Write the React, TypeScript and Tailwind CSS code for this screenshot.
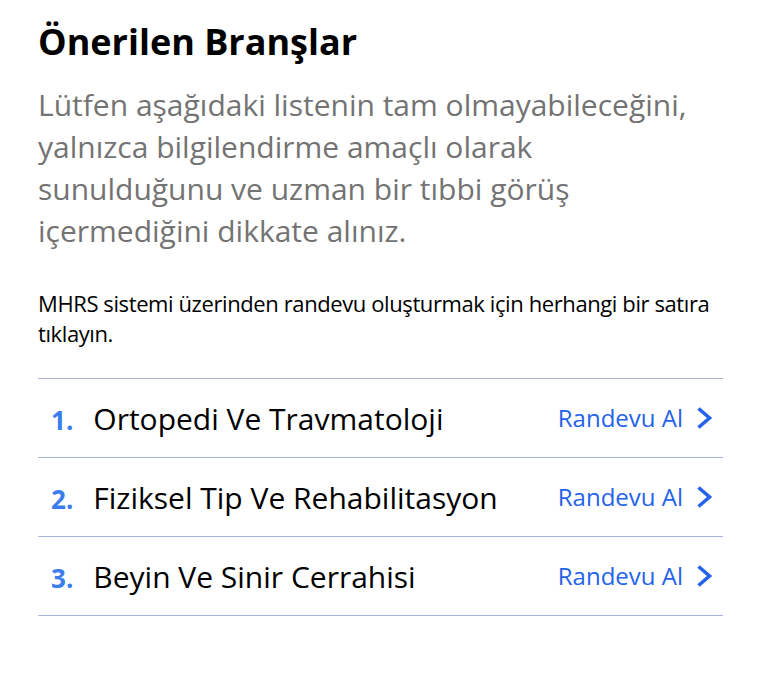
const branches = [
  "Ortopedi Ve Travmatoloji",
  "Fiziksel Tip Ve Rehabilitasyon",
  "Beyin Ve Sinir Cerrahisi",
];

function Chevron() {
  return (
    <svg width="18" height="24" viewBox="0 0 18 24" fill="none" className="shrink-0">
      <path d="M3.5 2.5l11 9.5-11 9.5" stroke="#2563eb" strokeWidth="3.6" />
    </svg>
  );
}

export default function App() {
  return (
    <div
      className="min-h-screen bg-white px-[38px] pt-[18px] text-black"
      style={{ fontFamily: '"Open Sans", sans-serif' }}
    >
      <div className="w-[685px]">
        <h1 className="text-[36px] font-bold leading-[48px]">Önerilen Branşlar</h1>
        <p className="mt-[18px] max-w-[666px] text-[30px] leading-[42px] text-[#737373]">
          Lütfen aşağıdaki listenin tam olmayabileceğini, yalnızca bilgilendirme amaçlı olarak
          sunulduğunu ve uzman bir tıbbi görüş içermediğini dikkate alınız.
        </p>
        <p className="mt-[36px] text-[22px] leading-[30px] tracking-[-0.4px]">
          MHRS sistemi üzerinden randevu oluşturmak için herhangi bir satıra tıklayın.
        </p>
        <ul className="mt-[30px] border-t border-[#aab5d6]">
          {branches.map((name, i) => (
            <li
              key={name}
              className="flex h-[79px] cursor-pointer items-center justify-between border-b border-[#aab5d6] pl-[13px] pr-[10px]"
            >
              <div className="flex items-baseline gap-[20px]">
                <span className="text-[26px] font-bold text-[#3b7ded]">{i + 1}.</span>
                <span className="text-[30px]">{name}</span>
              </div>
              <div className="flex items-center gap-[12px] text-[24px] text-[#2563eb]">
                <span>Randevu Al</span>
                <Chevron />
              </div>
            </li>
          ))}
        </ul>
      </div>
    </div>
  );
}
